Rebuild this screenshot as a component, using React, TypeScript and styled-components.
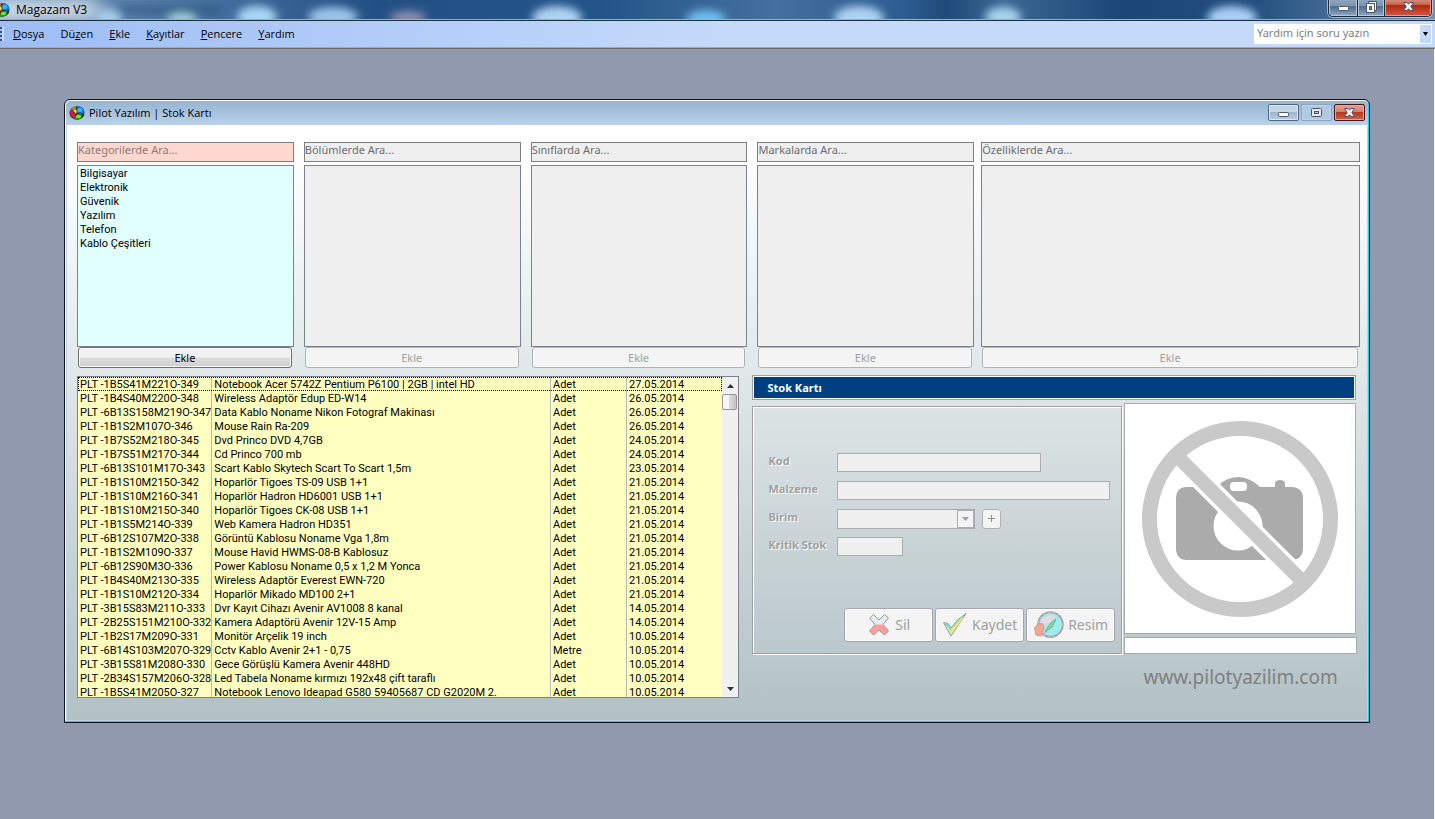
import React from "react";
import styled, { createGlobalStyle } from "styled-components";

const GlobalStyle = createGlobalStyle`
  *, *::before, *::after { box-sizing: border-box; }
  body { margin: 0; background: #9099ad; }
  body, button, input, select, table { font-family: Tahoma, Roboto, sans-serif; font-size: 11px; line-height: 14px; color: #000; }
  button, input, select { margin: 0; padding: 0; border-radius: 0; }
`;

const uiFont = `"Segoe UI", "Open Sans", sans-serif`;
const labelFont = `"Noto Sans", sans-serif`;

const Desktop = styled.div`
  min-height: 100vh;
  display: flex;
  flex-direction: column;
`;

/* ---------- application frame ---------- */

const AppBar = styled.header`
  position: relative;
  height: 21px;
  display: flex;
  justify-content: space-between;
  align-items: flex-start;
  overflow: hidden;
  background: #2c5a8e;
  border-bottom: 1px solid #1d3040;
  box-shadow: inset 0 -1px 0 #8fb4d0;
`;

const Backdrop = styled.svg`
  position: absolute;
  inset: 0;
  width: 100%;
  height: 19px;
`;

const AppTitle = styled.h1`
  position: relative;
  margin: 0;
  display: flex;
  align-items: center;
  gap: 6px;
  height: 19px;
  font: 400 12px/18px ${uiFont};
`;

const AppControls = styled.div`
  position: relative;
  display: flex;
  height: 17px;
  margin-right: 3px;
  border: 1px solid #1b2a3c;
  border-top: 0;
  border-radius: 0 0 5px 5px;
  overflow: hidden;
  box-shadow: 0 0 0 1px rgba(255, 255, 255, 0.5);
`;

const AppControl = styled.button<{ $w: number; $danger?: boolean }>`
  width: ${(p) => p.$w}px;
  display: flex;
  justify-content: center;
  align-items: flex-start;
  border: 1px solid ${(p) => (p.$danger ? "#e79a86" : "#b9c6d6")};
  border-top: 0;
  background: ${(p) =>
    p.$danger
      ? "linear-gradient(#d58a78 0, #c9634b 30%, #a92a12 34%, #d8503a 100%)"
      : "linear-gradient(#8ea4be 0, #7d95b1 40%, #4f6c8e 44%, #8aa3bf 100%)"};
  & + & { box-shadow: -1px 0 0 #1b2a3c; margin-left: 1px; }
`;

const MenuBar = styled.nav`
  height: 28px;
  display: flex;
  align-items: center;
  justify-content: space-between;
  padding: 0 3px 2px 0;
  background: linear-gradient(90deg, #9ebdf5 0, #bcd4fa 40%, #c5d9f9 50%);
  border-bottom: 1px solid #6e6c62;
  box-shadow: inset 0 -1px 0 #a3a9b4;
`;

const MenuItems = styled.ul`
  list-style: none;
  margin: 0;
  padding: 0;
  display: flex;
  align-items: center;
`;

const Grip = styled.li`
  width: 4px;
  height: 14px;
  margin-right: 9px;
  background: repeating-linear-gradient(#33508f 0 2px, transparent 2px 4px);
  border-right: 2px solid #c9dbfa;
`;

const MenuItem = styled.button`
  border: 0;
  background: none;
  margin-right: 16px;
  font: 400 11px/18px ${uiFont};
`;

const HelpBox = styled.form`
  display: flex;
  width: 178px;
  height: 20px;
  background: #fff;
  padding: 1px;
`;

const HelpInput = styled.input`
  flex: 1;
  min-width: 0;
  border: 0;
  padding: 0 2px 2px;
  background: none;
  font: 400 11px/16px ${labelFont};
  outline: 0;
  &::placeholder { color: #808080; opacity: 1; }
`;

const HelpArrow = styled.button`
  width: 11px;
  border: 0;
  background: #c5d9f9;
  display: grid;
  place-items: center;
`;

const Workspace = styled.main`
  flex: 1;
  padding: 50px 64px 96px;
  background: #9099ad;
  border-right: 1px solid #f2f4f8;
`;

/* ---------- stock card window ---------- */

const Window = styled.section`
  border: 1px solid #101418;
  border-radius: 6px 6px 0 0;
  background: #bcd3ec;
  padding: 0 2px 2px;
  box-shadow: inset -1px -1px 0 #35c5e8, inset 1px 1px 0 #fff;
`;

const WindowBar = styled.header`
  height: 24px;
  display: flex;
  align-items: center;
  margin: 1px -1px 0;
  padding: 0 3px 1px;
  border-radius: 5px 5px 0 0;
  background: linear-gradient(#98b4d0, #b9d1ea);
`;

const WindowTitle = styled.h2`
  flex: 1;
  margin: 0 0 0 4px;
  font: 400 11px/18px ${uiFont};
`;

const WindowControls = styled.div`
  display: flex;
  gap: 2px;
`;

const WindowControl = styled.button<{ $tone: "normal" | "flat" | "danger" }>`
  width: 31px;
  height: 17px;
  display: grid;
  place-items: center;
  border-radius: 2px;
  border: 1px solid ${(p) => ({ normal: "#54657c", flat: "#8ba2bf", danger: "#4b141b" })[p.$tone]};
  box-shadow: inset 0 0 0 1px ${(p) => ({ normal: "#dbe7f4", flat: "#c2d5ea", danger: "#e8a79c" })[p.$tone]};
  background: ${(p) =>
    ({
      normal: "linear-gradient(#c3d5e8 0 45%, #9db6d0 50%, #b7cde4)",
      flat: "#b0c8e2",
      danger: "linear-gradient(#e2a294 0, #d4806d 45%, #b73a20 50%, #cd6244)",
    })[p.$tone]};
`;

const Client = styled.div`
  padding: 17px 7px 22px 10px;
  background: linear-gradient(#fff 0, #fcfcfd 9%, #e4eaeb 38%, #cbd5d8 68%, #b2c1c5 100%);
`;

const FilterArea = styled.div`
  display: grid;
  grid-template-columns: minmax(0, 898fr) minmax(0, 379fr);
  gap: 7px;
`;

const FilterQuad = styled.div`
  display: grid;
  grid-template-columns: repeat(4, minmax(0, 1fr));
  gap: 10px;
`;

const Filter = styled.div`
  display: flex;
  flex-direction: column;
`;

const SearchInput = styled.input<{ $on?: boolean }>`
  height: 20px;
  width: 100%;
  padding: 0 0 5px;
  border: 1px solid #7f7f7f;
  background: ${(p) => (p.$on ? "#fed7cf" : "#efefef")};
  font: 400 11px/13px ${labelFont};
  &::placeholder { color: ${(p) => (p.$on ? "#8f7a77" : "#6d6d70")}; opacity: 1; }
`;

const ListBox = styled.select<{ $on?: boolean }>`
  height: 182px;
  width: 100%;
  margin-top: 3px;
  border: 1px solid #7b828c;
  background: ${(p) => (p.$on ? "#e0fffd" : "#efefef")};
  opacity: 1;
  outline: 0;
  overflow: hidden;
  padding: 1px 0;
  option { min-height: 14px; height: 14px; padding: 0 2px; font: 400 11px/14px Tahoma, Roboto, sans-serif; }
`;

const AddButton = styled.button`
  height: 21px;
  margin: 0 2px 0 1px;
  border: 1px solid #707070;
  border-radius: 3px;
  box-shadow: inset 0 0 0 1px #fafafa;
  background: linear-gradient(#f1f1f1 0 48%, #dcdcdc 52%, #cfcfcf);
  font: 400 11px/14px ${labelFont};
  &:disabled { border-color: #adb2b5; background: #f4f4f4; color: #a0a0a0; }
`;

const LowerArea = styled.div`
  display: grid;
  grid-template-columns: minmax(0, 663fr) minmax(0, 605fr);
  gap: 13px;
  padding-right: 3px;
  margin-top: 7px;
`;

const StockList = styled.div`
  display: flex;
  height: 322px;
  margin-top: 1px;
  border: 1px solid #7b828c;
  background: #ffffc0;
  overflow: hidden;
`;

const StockTable = styled.table`
  flex: 1;
  min-width: 0;
  height: max-content;
  table-layout: fixed;
  border-collapse: collapse;
  white-space: nowrap;
`;

const CodeCol = styled.col`width: 132px;`;
const UnitCol = styled.col`width: 76px;`;
const DateCol = styled.col`width: 96px;`;

const StockRow = styled.tr<{ $focus?: boolean }>`
  height: 14px;
  ${(p) => p.$focus && "outline: 1px dotted #000; outline-offset: -1px;"}
`;

const Cell = styled.td`
  padding: 1px 0 0 2px;
  line-height: 13px;
  overflow: hidden;
  & + & { border-left: 1px solid #b9b9b4; }
`;

const ScrollBar = styled.div`
  width: 16px;
  display: flex;
  flex-direction: column;
  background: #f0f0f0;
`;

const ScrollButton = styled.button`
  height: 17px;
  border: 0;
  background: none;
  display: grid;
  place-items: center;
`;

const ScrollTrack = styled.div`
  flex: 1;
  padding: 0 1px 0 0;
`;

const ScrollThumb = styled.div`
  height: 16px;
  border: 1px solid #979797;
  border-radius: 2px;
  background: linear-gradient(90deg, #f5f5f5 0 45%, #dcdce0 50%, #c4c4c8);
`;

const Card = styled.div`
  display: flex;
  flex-direction: column;
`;

const CardTitle = styled.h3`
  margin: 0 1px 0 0;
  height: 25px;
  padding: 0 14px;
  border: 1px solid #a0a0a0;
  box-shadow: inset 0 0 0 1px #fff;
  background: #004080;
  color: #fff;
  font: 700 11px/23px ${labelFont};
`;

const CardBody = styled.div`
  display: grid;
  grid-template-columns: minmax(0, 370fr) minmax(0, 233fr);
  gap: 2px;
  margin-top: 3px;
`;

const FormPanel = styled.form`
  display: flex;
  flex-direction: column;
  justify-content: space-between;
  margin-top: 3px;
  height: 248px;
  padding: 46px 6px 11px 15px;
  border: 1px solid #a0a0a0;
  box-shadow: inset 1px 1px 0 #fff, 1px 1px 0 #fff;
`;

const Fields = styled.div`
  display: flex;
  flex-direction: column;
  gap: 9px;
`;

const Field = styled.div`
  display: flex;
  align-items: center;
  height: 19px;
`;

const FieldLabel = styled.label`
  width: 69px;
  flex: none;
  padding-bottom: 3px;
  color: #a0a0a0;
  text-shadow: 1px 1px 0 #fff;
  font: 700 11px/14px ${labelFont};
  white-space: nowrap;
`;

const TextBox = styled.input<{ $w: number }>`
  width: ${(p) => p.$w}px;
  height: 19px;
  border: 1px solid #abadb3;
  background: #f0f0f0;
`;

const Combo = styled.div`
  display: flex;
  width: 138px;
  height: 20px;
  border: 1px solid #abadb3;
  background: #f0f0f0;
`;

const ComboSelect = styled.select`
  flex: 1;
  min-width: 0;
  border: 0;
  appearance: none;
  background: none;
`;

const ComboArrow = styled.span`
  width: 17px;
  display: grid;
  place-items: center;
  border: 1px solid #abadb3;
  background: #f4f4f4;
`;

const PlusButton = styled.button`
  width: 19px;
  height: 20px;
  margin-left: 7px;
  display: grid;
  place-items: center;
  border: 1px solid #adb2b5;
  border-radius: 3px;
  background: #f4f4f4;
`;

const Actions = styled.div`
  display: flex;
  justify-content: flex-end;
  gap: 2px;
`;

const ActionButton = styled.button`
  width: 89px;
  height: 34px;
  display: flex;
  align-items: center;
  justify-content: center;
  gap: 4px;
  border: 1px solid #a3a6ae;
  border-radius: 3px;
  box-shadow: inset 0 0 0 1px #fcfcfc;
  background: #f4f4f4;
  color: #a0a0a0;
  font: 400 14px/20px ${labelFont};
`;

const MediaColumn = styled.div`
  display: flex;
  flex-direction: column;
`;

const Photo = styled.figure`
  margin: 0 1px 3px 0;
  height: 231px;
  display: grid;
  place-items: center;
  border: 1px solid #a8abb0;
  background: #fff;
`;

const PhotoPath = styled.input`
  width: 100%;
  height: 17px;
  border: 1px solid #a8abb0;
  background: #fff;
`;

const SiteLink = styled.a`
  margin-top: 10px;
  align-self: center;
  color: #808080;
  text-decoration: none;
  font: 400 19px/26px ${labelFont};
`;

/* ---------- drawings ---------- */

const Globe = ({ cropped }: { cropped?: boolean }) => (
  <svg width={cropped ? 10 : 16} height="16" viewBox={cropped ? "6 0 10 16" : "0 0 16 16"} aria-hidden="true">
    <ellipse cx="8" cy="8" rx="7.5" ry="6.8" fill="#17301f" />
    <path d="M0.500 6 Q3 5 4.500 7 Q7 8 6.500 11 Q6 13 3.500 12.500 Q0.500 10 0.500 6 Z" fill="#d01a3c" />
    <path d="M1.500 5.500 Q3 1.500 7.500 1.300 Q6.500 4 6.500 6 Q4 5 1.500 5.500 Z" fill="#b87a20" />
    <path d="M4 6 Q6 3.500 7.500 5 Q8.500 7.500 7 9 Q6 7 4 6 Z" fill="#f6d63c" />
    <path d="M8 1.300 Q13 0.500 15 5 Q15.800 8.500 13.500 9.500 Q10 7 8 8 Q7 4 8 1.300 Z" fill="#0f66dc" />
    <ellipse cx="11" cy="5" rx="2.600" ry="2.200" fill="#35b4ff" />
    <path d="M4 12.800 Q7 12.500 7.500 9.500 Q10 8 13.500 10 Q12 14.500 8 14.700 Q5.500 14.600 4 12.800 Z" fill="#1f9a18" />
    <ellipse cx="9.500" cy="11.500" rx="2.600" ry="1.500" fill="#6ff03a" />
  </svg>
);

const BlurredDesktop = () => (
  <Backdrop viewBox="0 0 1435 19" preserveAspectRatio="none" aria-hidden="true">
    <defs>
      <filter id="soft" x="-20%" y="-100%" width="140%" height="300%">
        <feGaussianBlur stdDeviation="4" />
      </filter>
      <filter id="glow" x="-40%" y="-200%" width="180%" height="500%">
        <feGaussianBlur stdDeviation="9" />
      </filter>
      <linearGradient id="sky">
        <stop offset="0" stopColor="#6f93b8" />
        <stop offset="0.14" stopColor="#47719f" />
        <stop offset="0.26" stopColor="#235084" />
        <stop offset="0.42" stopColor="#245488" />
        <stop offset="0.54" stopColor="#44709f" />
        <stop offset="0.63" stopColor="#2d5c91" />
        <stop offset="0.66" stopColor="#1f4a79" />
        <stop offset="0.7" stopColor="#3c6894" />
        <stop offset="0.78" stopColor="#1c4676" />
        <stop offset="0.87" stopColor="#214d7d" />
        <stop offset="1" stopColor="#6f90b2" />
      </linearGradient>
    </defs>
    <rect width="1435" height="19" fill="url(#sky)" />
    <rect x="-10" y="1" width="110" height="18" fill="#fff" opacity="0.85" filter="url(#glow)" />
    <rect x="120" y="7" width="100" height="6" fill="#244c70" opacity="0.6" filter="url(#soft)" />
    <g filter="url(#soft)">
      <ellipse cx="108" cy="18" rx="14" ry="9" fill="#a9cdec" />
      <ellipse cx="182" cy="19" rx="15" ry="7" fill="#a2cfd6" />
      <ellipse cx="257" cy="17" rx="20" ry="11" fill="#a8d6f6" />
      <ellipse cx="333" cy="17" rx="25" ry="10" fill="#9cc4ea" />
      <ellipse cx="408" cy="18" rx="18" ry="7" fill="#8f8fae" />
      <ellipse cx="557" cy="18" rx="25" ry="12" fill="#add2f3" />
      <ellipse cx="706" cy="19" rx="20" ry="9" fill="#6fc0ef" />
      <ellipse cx="859" cy="18" rx="25" ry="12" fill="#add2f3" />
      <ellipse cx="1003" cy="17" rx="18" ry="10" fill="#a9d3ee" />
      <ellipse cx="1232" cy="18" rx="25" ry="12" fill="#a8cff5" />
    </g>
  </Backdrop>
);

const MinimizeGlyph = () => (
  <svg width="13" height="13" viewBox="0 0 13 13" aria-hidden="true">
    <rect x="1.5" y="6.5" width="10" height="4" rx="1" fill="#fff" stroke="#4f5668" />
  </svg>
);

const MaximizeGlyph = () => (
  <svg width="13" height="13" viewBox="0 0 13 13" aria-hidden="true">
    <rect x="1.5" y="2.5" width="10" height="8" rx="1" fill="#e3e6ea" stroke="#4f5668" />
    <rect x="4.5" y="5.5" width="4" height="2" fill="#b0c8e2" stroke="#4f5668" />
  </svg>
);

const RestoreGlyph = () => (
  <svg width="13" height="14" viewBox="0 0 13 14" aria-hidden="true">
    <path d="M3.5 1.5 H11.5 V10.5 H9.5 V3.5 H3.5 Z" fill="#fff" stroke="#4f5668" />
    <rect x="1.5" y="3.5" width="8" height="9" fill="#fff" stroke="#4f5668" />
    <rect x="4.5" y="6.5" width="2" height="3" fill="#7d95b1" stroke="#4f5668" />
  </svg>
);

const CloseGlyph = () => (
  <svg width="13" height="13" viewBox="0 0 13 13" aria-hidden="true">
    <path
      d="M1.5 2.5 H5 L6.5 4.2 L8 2.5 H11.5 L8.8 6.5 L11.5 10.5 H8 L6.5 8.8 L5 10.5 H1.5 L4.2 6.5 Z"
      fill="#f4f4f6"
      stroke="#53506a"
      strokeLinejoin="round"
    />
  </svg>
);

const Triangle = ({ up, color = "#000", size = 7 }: { up?: boolean; color?: string; size?: number }) => (
  <svg width={size} height="4" viewBox="0 0 8 4" preserveAspectRatio="none" aria-hidden="true">
    <path d={up ? "M0 4 L4 0 L8 4 Z" : "M0 0 L4 4 L8 0 Z"} fill={color} />
  </svg>
);

const NoPhoto = () => (
  <svg width="198" height="198" viewBox="0 0 198 198" role="img" aria-label="Resim yok">
    <path
      fill="#ababab"
      d="M46 67 H78 V65 Q86 57 98 57 Q110 58 119 67 H134 V64 Q134 60 139 60 Q144 60 144 64 V67 H150 Q162 67 162 79 V128 Q162 140 150 140 H46 Q35 140 35 128 V79 Q35 67 46 67 Z"
    />
    <rect x="89" y="62" width="17" height="9" rx="4" fill="#fff" />
    <circle cx="97" cy="106" r="24.500" fill="#fff" />
    <path d="M34 34 L164 164" stroke="#fff" strokeWidth="21" />
    <path d="M34 34 L164 164" stroke="#c9c9c9" strokeWidth="14" />
    <circle cx="99" cy="99" r="90.500" fill="none" stroke="#c9c9c9" strokeWidth="15" />
  </svg>
);

const DeleteIcon = () => (
  <svg width="24" height="24" viewBox="0 0 24 24" aria-hidden="true">
    <path d="M2.500 5 L6.500 1.500 L12 7 L17.500 1.500 L21.500 5 L16 11.500 H8 Z" fill="#e2eef2" stroke="#96999d" />
    <path d="M8 11.500 H16 L21.500 18 L17.500 22 L12 17 L6.500 22 L2.500 18 Z" fill="#f2a2a2" stroke="#b58e92" />
    <path d="M8 11.500 H16" stroke="#eec4c6" />
  </svg>
);

const SaveIcon = () => (
  <svg width="26" height="26" viewBox="0 0 26 26" aria-hidden="true">
    <path d="M1.500 10.500 L6 11.500 L9 16 Q15 7 24 1.500 Q17 12 9 24 Q5 17 1.500 10.500 Z" fill="#d8f0a4" stroke="#96999d" />
    <path d="M3 12 L6 13 L9 18" fill="none" stroke="#6fdcc0" strokeWidth="2" />
    <path d="M9 21 L20 6" stroke="#f2ea7c" strokeWidth="2" />
    <path d="M11 15 L20 5" stroke="#8fdc9c" />
  </svg>
);

const PictureIcon = () => (
  <svg width="31" height="28" viewBox="0 0 31 28" aria-hidden="true">
    <circle cx="17.500" cy="13.500" r="12.300" fill="#9fecef" stroke="#a5a0b0" strokeWidth="2" />
    <circle cx="17.500" cy="13.500" r="12.300" fill="none" stroke="#c9d890" strokeWidth="1" strokeDasharray="2 3" />
    <path d="M7 11 Q12 3 22 5 L17 11 L9 15 Z" fill="#ead9e0" />
    <path d="M1.500 17 Q5 11 10 13 L11 17 L8 25 L3 24 Z" fill="#f6a58e" stroke="#c0a29c" />
    <path d="M12 21 L17 13 L23 8 L19 16 Z" fill="#8fd69a" stroke="#7fa58a" />
    <path d="M9 24 L13 21" stroke="#d88fd0" strokeWidth="1" />
  </svg>
);

/* ---------- data ---------- */

const menu: [string, string, string][] = [
  ["", "D", "osya"],
  ["Dü", "z", "en"],
  ["", "E", "kle"],
  ["", "K", "ayıtlar"],
  ["", "P", "encere"],
  ["", "Y", "ardım"],
];

const categories = ["Bilgisayar", "Elektronik", "Güvenik", "Yazılım", "Telefon", "Kablo Çeşitleri"];

const stock: [string, string, string, string][] = [
  ["PLT -1B5S41M221O-349", "Notebook Acer 5742Z Pentium P6100 | 2GB | intel HD", "Adet", "27.05.2014"],
  ["PLT -1B4S40M220O-348", "Wireless Adaptör Edup ED-W14", "Adet", "26.05.2014"],
  ["PLT -6B13S158M219O-347", "Data Kablo Noname Nikon Fotograf Makinası", "Adet", "26.05.2014"],
  ["PLT -1B1S2M107O-346", "Mouse Rain Ra-209", "Adet", "26.05.2014"],
  ["PLT -1B7S52M218O-345", "Dvd Princo DVD 4,7GB", "Adet", "24.05.2014"],
  ["PLT -1B7S51M217O-344", "Cd Princo 700 mb", "Adet", "24.05.2014"],
  ["PLT -6B13S101M17O-343", "Scart Kablo Skytech Scart To Scart 1,5m", "Adet", "23.05.2014"],
  ["PLT -1B1S10M215O-342", "Hoparlör Tigoes TS-09 USB 1+1", "Adet", "21.05.2014"],
  ["PLT -1B1S10M216O-341", "Hoparlör Hadron HD6001 USB 1+1", "Adet", "21.05.2014"],
  ["PLT -1B1S10M215O-340", "Hoparlör Tigoes CK-08 USB 1+1", "Adet", "21.05.2014"],
  ["PLT -1B1S5M214O-339", "Web Kamera Hadron HD351", "Adet", "21.05.2014"],
  ["PLT -6B12S107M2O-338", "Görüntü Kablosu Noname Vga 1,8m", "Adet", "21.05.2014"],
  ["PLT -1B1S2M109O-337", "Mouse Havid HWMS-08-B Kablosuz", "Adet", "21.05.2014"],
  ["PLT -6B12S90M3O-336", "Power Kablosu Noname 0,5 x 1,2 M Yonca", "Adet", "21.05.2014"],
  ["PLT -1B4S40M213O-335", "Wireless Adaptör Everest EWN-720", "Adet", "21.05.2014"],
  ["PLT -1B1S10M212O-334", "Hoparlör Mikado MD100 2+1", "Adet", "21.05.2014"],
  ["PLT -3B15S83M211O-333", "Dvr Kayıt Cihazı Avenir AV1008 8 kanal", "Adet", "14.05.2014"],
  ["PLT -2B25S151M210O-332", "Kamera Adaptörü Avenir 12V-15 Amp", "Adet", "14.05.2014"],
  ["PLT -1B2S17M209O-331", "Monitör Arçelik 19 inch", "Adet", "10.05.2014"],
  ["PLT -6B14S103M207O-329", "Cctv Kablo Avenir 2+1 - 0,75", "Metre", "10.05.2014"],
  ["PLT -3B15S81M208O-330", "Gece Görüşlü Kamera Avenir 448HD", "Adet", "10.05.2014"],
  ["PLT -2B34S157M206O-328", "Led Tabela Noname kırmızı 192x48 çift taraflı", "Adet", "10.05.2014"],
  ["PLT -1B5S41M205O-327", "Notebook Lenovo Ideapad G580 59405687 CD G2020M 2.", "Adet", "10.05.2014"],
];

const FilterColumn = ({ placeholder, items = [] }: { placeholder: string; items?: string[] }) => {
  const on = items.length > 0;
  return (
    <Filter>
      <SearchInput type="text" aria-label={placeholder} placeholder={placeholder} $on={on} disabled={!on} />
      <ListBox size={13} aria-label={placeholder} $on={on} disabled={!on}>
        {items.map((item) => (
          <option key={item}>{item}</option>
        ))}
      </ListBox>
      <AddButton type="button" disabled={!on}>Ekle</AddButton>
    </Filter>
  );
};

export default function App() {
  return (
    <Desktop>
      <GlobalStyle />
      <AppBar>
        <BlurredDesktop />
        <AppTitle>
          <Globe cropped />
          Magazam V3
        </AppTitle>
        <AppControls>
          <AppControl $w={28} aria-label="Simge durumuna küçült"><MinimizeGlyph /></AppControl>
          <AppControl $w={26} aria-label="Önceki boyut"><RestoreGlyph /></AppControl>
          <AppControl $w={46} $danger aria-label="Kapat"><CloseGlyph /></AppControl>
        </AppControls>
      </AppBar>
      <MenuBar>
        <MenuItems>
          <Grip />
          {menu.map(([before, key, after]) => (
            <li key={before + key + after}>
              <MenuItem type="button">{before}<u>{key}</u>{after}</MenuItem>
            </li>
          ))}
        </MenuItems>
        <HelpBox>
          <HelpInput type="text" aria-label="Yardım" placeholder="Yardım için soru yazın" />
          <HelpArrow type="button" aria-label="Son sorular"><Triangle size={5} /></HelpArrow>
        </HelpBox>
      </MenuBar>
      <Workspace>
        <Window>
          <WindowBar>
            <Globe />
            <WindowTitle>Pilot Yazılım | Stok Kartı</WindowTitle>
            <WindowControls>
              <WindowControl $tone="normal" aria-label="Simge durumuna küçült"><MinimizeGlyph /></WindowControl>
              <WindowControl $tone="flat" aria-label="Ekranı kapla"><MaximizeGlyph /></WindowControl>
              <WindowControl $tone="danger" aria-label="Kapat"><CloseGlyph /></WindowControl>
            </WindowControls>
          </WindowBar>
          <Client>
            <FilterArea>
              <FilterQuad>
                <FilterColumn placeholder="Kategorilerde Ara..." items={categories} />
                <FilterColumn placeholder="Bölümlerde Ara..." />
                <FilterColumn placeholder="Sınıflarda Ara..." />
                <FilterColumn placeholder="Markalarda Ara..." />
              </FilterQuad>
              <FilterColumn placeholder="Özelliklerde Ara..." />
            </FilterArea>
            <LowerArea>
              <StockList>
                <StockTable>
                  <colgroup>
                    <CodeCol />
                    <col />
                    <UnitCol />
                    <DateCol />
                  </colgroup>
                  <tbody>
                    {stock.map((row, i) => (
                      <StockRow key={row[0]} $focus={i === 0}>
                        {row.map((text, c) => (
                          <Cell key={c}>{text}</Cell>
                        ))}
                      </StockRow>
                    ))}
                  </tbody>
                </StockTable>
                <ScrollBar>
                  <ScrollButton type="button" aria-label="Yukarı"><Triangle up color="#333" /></ScrollButton>
                  <ScrollTrack><ScrollThumb /></ScrollTrack>
                  <ScrollButton type="button" aria-label="Aşağı"><Triangle color="#333" /></ScrollButton>
                </ScrollBar>
              </StockList>
              <Card>
                <CardTitle>Stok Kartı</CardTitle>
                <CardBody>
                  <FormPanel>
                    <Fields>
                      <Field>
                        <FieldLabel htmlFor="kod">Kod</FieldLabel>
                        <TextBox id="kod" type="text" $w={204} disabled />
                      </Field>
                      <Field>
                        <FieldLabel htmlFor="malzeme">Malzeme</FieldLabel>
                        <TextBox id="malzeme" type="text" $w={273} disabled />
                      </Field>
                      <Field>
                        <FieldLabel htmlFor="birim">Birim</FieldLabel>
                        <Combo>
                          <ComboSelect id="birim" disabled />
                          <ComboArrow><Triangle color="#a0a0a0" /></ComboArrow>
                        </Combo>
                        <PlusButton type="button" disabled aria-label="Birim ekle">
                          <svg width="7" height="7" viewBox="0 0 7 7" aria-hidden="true">
                            <path d="M3.500 0 V7 M0 3.500 H7" stroke="#909090" />
                          </svg>
                        </PlusButton>
                      </Field>
                      <Field>
                        <FieldLabel htmlFor="kritik">Kritik Stok</FieldLabel>
                        <TextBox id="kritik" type="text" $w={66} disabled />
                      </Field>
                    </Fields>
                    <Actions>
                      <ActionButton type="button" disabled><DeleteIcon />Sil</ActionButton>
                      <ActionButton type="button" disabled><SaveIcon />Kaydet</ActionButton>
                      <ActionButton type="button" disabled><PictureIcon />Resim</ActionButton>
                    </Actions>
                  </FormPanel>
                  <MediaColumn>
                    <Photo><NoPhoto /></Photo>
                    <PhotoPath type="text" aria-label="Resim yolu" readOnly />
                    <SiteLink href="#">www.pilotyazilim.com</SiteLink>
                  </MediaColumn>
                </CardBody>
              </Card>
            </LowerArea>
          </Client>
        </Window>
      </Workspace>
    </Desktop>
  );
}
